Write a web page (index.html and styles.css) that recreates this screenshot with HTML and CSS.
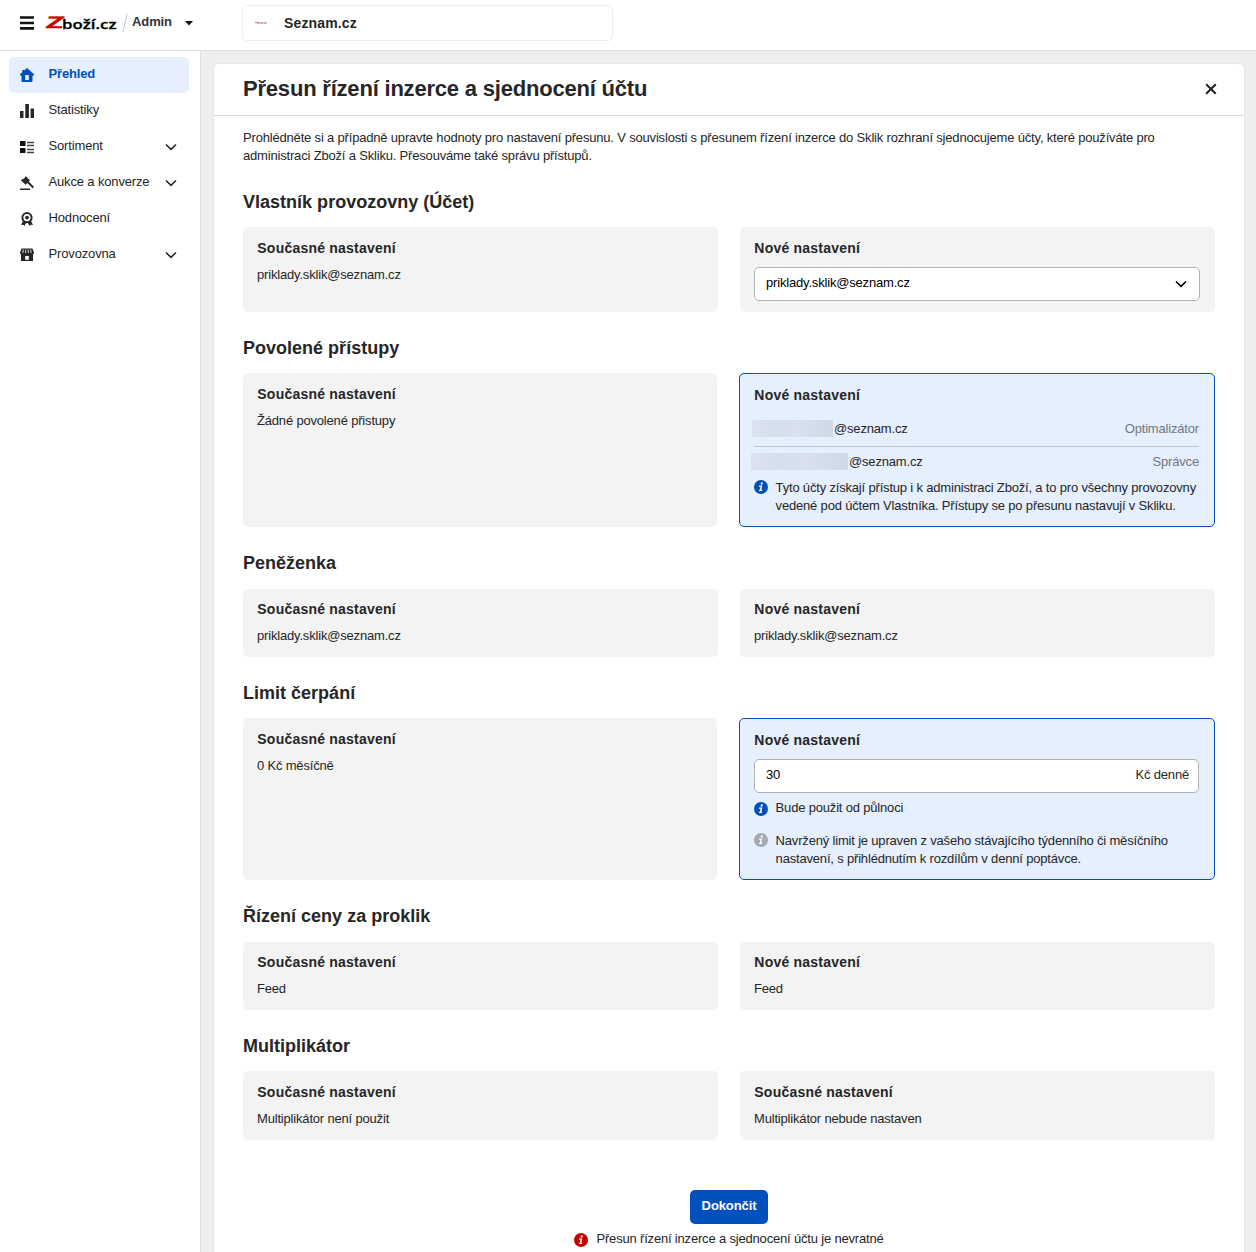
FILE: index.html
```html
<!DOCTYPE html>
<html lang="cs">
<head>
<meta charset="utf-8">
<title>Přesun řízení inzerce a sjednocení účtu</title>
<link rel="stylesheet" href="styles.css">
</head>
<body>
<svg class="defs" aria-hidden="true">
  <symbol id="chevron" viewBox="0 0 12 8"><path d="M1 1.5 6 6.3 11 1.5" fill="none" stroke="currentColor" stroke-width="1.6"/></symbol>
  <symbol id="info" viewBox="0 0 14 14"><circle cx="7" cy="7" r="7" fill="currentColor"/><path d="M6.9 2.600h2l-.3 1.900H6.600zM5.200 5.500h3.100l-.9 4.300h.9l-.3 1.300H4.900l.3-1.300h.7l.6-3H4.900z" fill="#fff"/></symbol>
</svg>
<header class="topbar">
  <svg class="menu" viewBox="0 0 14 14"><path d="M0 1.5h14M0 7h14M0 12.4h14" stroke="#111" stroke-width="2.6"/></svg>
  <svg class="logo" viewBox="0 0 72 18" aria-label="Zboží.cz">
    <g transform="skewX(-12)"><text class="logo-z" x="3.500" y="14.300" textLength="17" lengthAdjust="spacingAndGlyphs">Z</text></g>
    <text class="logo-rest" x="17" y="14.600" textLength="54.500" lengthAdjust="spacingAndGlyphs">boží.cz</text>
  </svg>
  <svg class="slash" viewBox="0 0 6 18"><path d="M5.300 0 .7 18" stroke="#c4c4c4" stroke-width="1"/></svg>
  <span class="admin">Admin</span>
  <svg class="caret" viewBox="0 0 8 5"><path d="M0 0h8L4 4.500z" fill="#111"/></svg>
  <div class="shop">
    <svg class="shop-logo" viewBox="0 0 12 4"><path d="M0 1.500h3" stroke="#e66" stroke-width="1"/><path d="M2 2h10" stroke="#777" stroke-width="1.200" stroke-dasharray="3 .4"/></svg>
    <span>Seznam.cz</span>
  </div>
</header>
<div class="layout">
  <nav class="sidebar">
    <a class="item active"><svg class="ico" viewBox="0 0 14 14"><path d="M7 0 14 6.200V7.500H12.500V13q0 1-1 1h-9q-1 0-1-1V7.500H0V6.200L2.300 4.200V2h2v.5zM5.200 7v5h3.600V7z" fill="currentColor" fill-rule="evenodd"/></svg><span>Přehled</span></a>
    <a class="item"><svg class="ico" viewBox="0 0 14 14"><path d="M0 7h3.500v7H0zM5.300 0h3.600v14H5.300zM10.600 4.500H14V14h-3.400z" fill="currentColor"/></svg><span>Statistiky</span></a>
    <a class="item"><svg class="ico" viewBox="0 0 14 14"><path d="M0 1h5.500v5H0zM0 8h5.500v5H0z" fill="#111"/><path d="M7 2.500h7M7 5.500h7M7 9.500h7M7 12.500h7" stroke="#444" stroke-width="1.300"/></svg><span>Sortiment</span><svg class="chev"><use href="#chevron"/></svg></a>
    <a class="item"><svg class="ico" viewBox="0 0 14 14"><path d="M5.500 0 10 4.300 8.800 5.500 14 11l-1.300 1.300L7.300 7 5.700 8.700 1 4.500 2.500 3.100l1-.1L5 1.500zM0 12.600h10V14H0z" fill="currentColor"/></svg><span>Aukce a konverze</span><svg class="chev"><use href="#chevron"/></svg></a>
    <a class="item"><svg class="ico" viewBox="0 0 14 14"><circle cx="7" cy="5.600" r="4.600" fill="none" stroke="currentColor" stroke-width="2"/><circle cx="7" cy="5.600" r="1.900" fill="currentColor"/><path d="m3 9-2 4 2.200-.2L4.500 14l1.800-3.500h1.400L9.500 14l1.300-1.200L13 13l-2-4-4 1.500z" fill="currentColor"/></svg><span>Hodnocení</span></a>
    <a class="item"><svg class="ico" viewBox="0 0 14 14"><path d="M1.500.5h11L14 4.500q0 1.700-1 2V13H1V6.500q-1-.3-1-2zM5.200 8v3.700h3.600V8z" fill="currentColor" fill-rule="evenodd"/><path d="M3.300 1.500 2.900 5M5.800 1.500 5.600 5M8.200 1.500 8.400 5M10.700 1.500l.4 3.500" stroke="#fff" stroke-width=".8"/></svg><span>Provozovna</span><svg class="chev"><use href="#chevron"/></svg></a>
  </nav>
  <main class="panel">
    <div class="panel-head"><h1>Přesun řízení inzerce a sjednocení účtu</h1>
      <svg class="close" viewBox="0 0 12 12"><path d="m1.200 1.200 9.600 9.600M10.800 1.200 1.200 10.800" stroke="#222" stroke-width="2"/></svg></div>
    <div class="content">
      <p class="intro">Prohlédněte si a případně upravte hodnoty pro nastavení přesunu. V souvislosti s přesunem řízení inzerce do Sklik rozhraní sjednocujeme účty, které používáte pro<br>administraci Zboží a Skliku. Přesouváme také správu přístupů.</p>

      <h2>Vlastník provozovny (Účet)</h2>
      <div class="pair owner">
        <section class="card"><h3>Současné nastavení</h3><p>priklady.sklik@seznam.cz</p></section>
        <section class="card"><h3>Nové nastavení</h3><div class="field"><span>priklady.sklik@seznam.cz</span><svg class="chev"><use href="#chevron"/></svg></div></section>
      </div>

      <h2>Povolené přístupy</h2>
      <div class="pair access">
        <section class="card"><h3>Současné nastavení</h3><p>Žádné povolené přistupy</p></section>
        <section class="card changed"><h3>Nové nastavení</h3>
          <div class="user"><i class="redacted short"></i><span>@seznam.cz</span><em>Optimalizátor</em></div>
          <div class="user second"><i class="redacted long"></i><span>@seznam.cz</span><em>Správce</em></div>
          <div class="note"><svg class="info"><use href="#info"/></svg><span>Tyto účty získají přístup i k administraci Zboží, a to pro všechny provozovny<br>vedené pod účtem Vlastníka. Přístupy se po přesunu nastavují v Skliku.</span></div>
        </section>
      </div>

      <h2 class="tall">Peněženka</h2>
      <div class="pair compact">
        <section class="card"><h3>Současné nastavení</h3><p>priklady.sklik@seznam.cz</p></section>
        <section class="card"><h3>Nové nastavení</h3><p>priklady.sklik@seznam.cz</p></section>
      </div>

      <h2>Limit čerpání</h2>
      <div class="pair limit">
        <section class="card"><h3>Současné nastavení</h3><p>0 Kč měsíčně</p></section>
        <section class="card changed"><h3>Nové nastavení</h3>
          <div class="field"><span>30</span><span class="unit">Kč denně</span></div>
          <div class="note"><svg class="info low"><use href="#info"/></svg><span>Bude použit od půlnoci</span></div>
          <div class="note hint"><svg class="info grey"><use href="#info"/></svg><span>Navržený limit je upraven z vašeho stávajícího týdenního či měsíčního<br>nastavení, s přihlédnutím k rozdílům v denní poptávce.</span></div>
        </section>
      </div>

      <h2 class="tall">Řízení ceny za proklik</h2>
      <div class="pair compact">
        <section class="card"><h3>Současné nastavení</h3><p>Feed</p></section>
        <section class="card"><h3>Nové nastavení</h3><p>Feed</p></section>
      </div>

      <h2>Multiplikátor</h2>
      <div class="pair last">
        <section class="card"><h3>Současné nastavení</h3><p>Multiplikátor není použit</p></section>
        <section class="card"><h3>Současné nastavení</h3><p>Multiplikátor nebude nastaven</p></section>
      </div>

      <div class="finish">
        <button>Dokončit</button>
        <div class="warning"><svg class="info red"><use href="#info"/></svg><span>Přesun řízení inzerce a sjednocení účtu je nevratné</span></div>
      </div>
    </div>
  </main>
</div>
</body>
</html>
```
FILE: styles.css
```css
* { box-sizing: border-box; }
body { margin: 0; height: 1252px; overflow: hidden; background: #eee; color: #262626; font: 13px/18px "Liberation Sans", Arial, sans-serif; letter-spacing: -0.18px; }
h1, h2, h3, p { margin: 0; }
svg { flex: none; display: block; }
.defs { display: none; }

.topbar { display: flex; height: 51px; background: #fff; border-bottom: 1px solid #e0e0e0; padding-left: 20px; align-items: flex-start; }
.menu { width: 14px; height: 14px; margin-top: 16px; }
.logo { width: 72px; height: 18px; margin: 14px 0 0 11px; overflow: visible; letter-spacing: 0; }
.logo-z { font: 900 16px Lato, sans-serif; fill: #d00000; stroke: #d00000; stroke-width: .4px; stroke-linejoin: round; }
.logo-rest { font: 600 13px "Open Sans", sans-serif; fill: #000; stroke: #000; stroke-width: .3px; }
.slash { width: 6px; height: 18px; margin: 14px 0 0 5px; }
.admin { margin: 13px 0 0 4px; width: 49px; font-weight: 700; letter-spacing: -.1px; color: #333; }
.caret { width: 8px; height: 5px; margin: 21px 0 0 4px; }
.shop { display: flex; align-items: center; width: 371px; height: 36px; margin: 5px 0 0 49px; padding-left: 12px; border: 1px solid #eee; border-radius: 5px; font-weight: 700; font-size: 14px; letter-spacing: .15px; }
.shop-logo { width: 12px; height: 4px; margin-right: 17px; }

.layout { display: flex; height: 1201px; }
.sidebar { width: 201px; background: #fff; border-right: 1px solid #ddd; padding: 6px 0 0 9px; }
.item { display: flex; width: 180px; height: 36px; padding: 8px 12px 0 11px; border-radius: 5px; }
.item span { flex: 1; margin-left: 14.5px; letter-spacing: -.15px; }
.ico { width: 14px; height: 14px; margin-top: 3px; }
.chev { width: 12px; height: 8px; margin-top: 6px; }
.active { background: #e5effe; color: #0050bd; font-weight: 700; }

.panel { width: 1032px; margin: 12px 0 0 12px; background: #fff; border: 1px solid #e6e6e6; border-bottom: 0; border-radius: 6px 6px 0 0; }
.panel-head { display: flex; justify-content: space-between; height: 52px; border-bottom: 1px solid #d9d9d9; padding: 11px 27px 0 29px; }
h1 { font-size: 22px; line-height: 28px; letter-spacing: -.2px; }
.close { width: 12px; height: 12px; margin-top: 8px; }
.content { padding: 13px 29px 0; }
.intro { height: 37px; white-space: nowrap; }
h2 { height: 61px; padding-top: 24px; font-size: 18px; line-height: 24px; letter-spacing: .01px; }
h2.tall { height: 62px; }
.pair { display: flex; gap: 22px; height: 68px; }
.owner { height: 85px; }
.access { height: 154px; }
.limit { height: 162px; }
.last { height: 69px; }
.card { flex: 1 1 0; min-width: 0; background: #f3f3f3; border-radius: 5px; padding: 12px 15px 0 14px; }
.compact .card { padding-top: 11px; }
.card.changed { flex: 0 0 476px; background: #e5effe; border: 1px solid #0050bd; }
h3 { padding-left: .3px; font-size: 14px; line-height: 18px; letter-spacing: .22px; }
.card p { margin-top: 9px; }
.field { display: flex; justify-content: space-between; height: 34px; margin-top: 10px; padding: 6px 11px; background: #fff; border: 1px solid #b3b3b3; border-radius: 5px; color: #000; }
.field .chev { margin: 6px 1px 0; }
.unit { color: #262626; margin-right: -2px; }
.user { display: flex; align-items: center; height: 33px; border-bottom: 1px solid #b9c3d3; margin-top: 10px; padding-bottom: 2px; }
.user em { margin-left: auto; font-style: normal; color: #737780; }
.user.second { height: 27px; margin-top: 0; padding: 3px 0 0; border: 0; }
.redacted { position: relative; top: -1px; height: 17px; background: linear-gradient(90deg, #dbe3ef, #d5deeb 30%, #d8e1ed 55%, #cfd8e6); }
.short { width: 81px; margin: 0 1px 0 -2px; }
.long { width: 97px; margin: 0 1px 0 -3px; }
.note { display: flex; gap: 7.6px; white-space: nowrap; }
.info { width: 14px; height: 14px; margin-top: 2px; color: #0050bd; }
.access .note { margin-top: 5px; }
.access .info { margin-top: 1px; }
.limit .note { margin-top: 6px; }
.limit .note.hint { margin-top: 15px; }
.info.low { margin-top: 3px; }
.info.grey { color: #a6a9af; margin-top: 1px; }
.finish { padding-top: 50px; display: flex; flex-direction: column; align-items: center; }
button { width: 78px; height: 34px; padding: 0 0 3px; border: 0; border-radius: 5px; background: #0050bd; color: #fff; font: 700 13px "Liberation Sans", Arial, sans-serif; letter-spacing: -.1px; }
.warning { display: flex; gap: 8px; margin-top: 6px; }
.info.red { color: #c80000; margin-top: 3px; }
```
